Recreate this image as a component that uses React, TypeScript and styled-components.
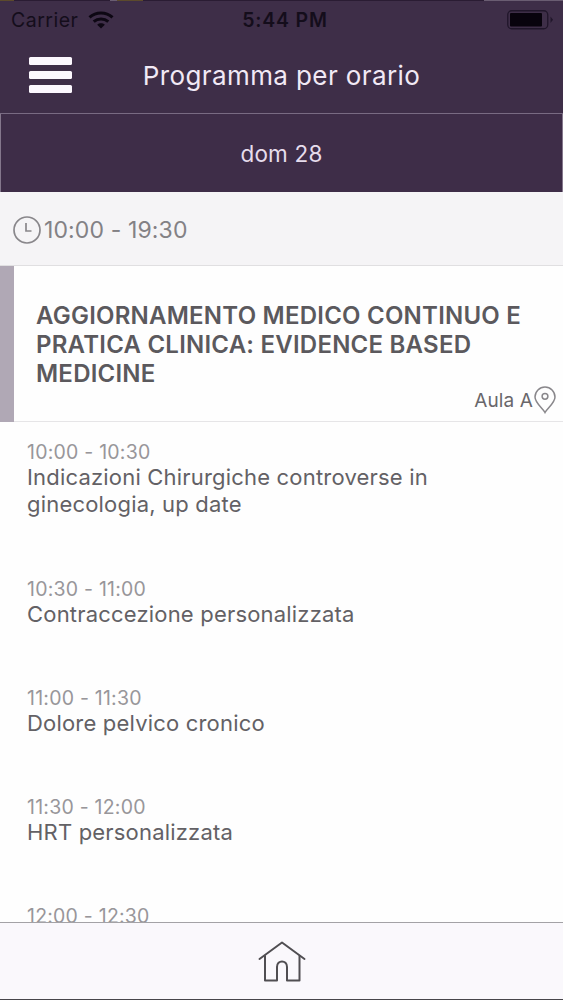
import React from "react";
import styled, { createGlobalStyle } from "styled-components";

const GlobalStyle = createGlobalStyle`
  * { box-sizing: border-box; }
  body { margin: 0; background: #fefefe; font-family: Inter, "Liberation Sans", sans-serif; }
`;

const Screen = styled.div`
  display: flex;
  flex-direction: column;
  width: 563px;
  height: 1000px;
  overflow: hidden;
  background: #fefefe;
  border-bottom: 1px solid #47454a;
`;

const Header = styled.header`
  flex: none;
  height: 114px;
  padding-top: 1px;
  background:
    linear-gradient(90deg, #5c4a2c 0 14px, #2a1c33 14px 110px, #6a5d72 110px 117px, #5c4a2c 117px 143px, #2a1c33 143px 484px, #6a5d72 484px) top / 100% 1px no-repeat,
    #3e2e48;
  border-bottom: 1px solid #796b83;
`;

const StatusBar = styled.div`
  display: grid;
  grid-template-columns: 1fr auto 1fr;
  align-items: center;
  height: 37px;
  padding: 0 10px 0 11px;
  color: #140d1b;
`;

const Carrier = styled.div`
  display: flex;
  align-items: center;
  gap: 10px;
  font-size: 19.5px;
  letter-spacing: 0.5px;
`;

const Clock = styled.div`
  padding-left: 6px;
  font-size: 19.5px;
  font-weight: 600;
  letter-spacing: 0.8px;
`;

const Battery = styled.svg`
  justify-self: end;
`;

const TitleBar = styled.div`
  display: grid;
  grid-template-columns: 1fr auto 1fr;
  align-items: center;
  height: 75px;
  padding: 0 29px;
`;

const MenuButton = styled.div`
  display: flex;
  flex-direction: column;
  gap: 6px;
  width: 43px;
  padding-bottom: 2px;
`;

const MenuLine = styled.span`
  height: 8px;
  border-radius: 1.5px;
  background: #fcf8fe;
`;

const PageTitle = styled.h1`
  margin: 0;
  font-size: 26px;
  line-height: 32px;
  font-weight: 400;
  letter-spacing: 0.4px;
  color: #f1e9f5;
  white-space: nowrap;
`;

const DayTab = styled.div`
  flex: none;
  display: flex;
  align-items: center;
  justify-content: center;
  height: 78px;
  background: #3e2d48;
  border: solid #84778c;
  border-width: 0 1px;
  font-size: 22.5px;
  letter-spacing: 0.2px;
  color: #e6dcec;
`;

const SlotBar = styled.div`
  flex: none;
  display: flex;
  align-items: center;
  gap: 3px;
  height: 74px;
  padding: 2px 0 0 13px;
  background: #f5f4f6;
  border-bottom: 1px solid #e0dfe1;
  font-size: 23px;
  letter-spacing: 0.12px;
  color: #838185;
`;

const Session = styled.section`
  flex: none;
  display: flex;
  flex-direction: column;
  height: 156px;
  padding: 35px 7px 10px 22px;
  border-left: 14px solid #b0a8b5;
  box-shadow: inset 0 -1px #e6e5e7;
`;

const SessionTitle = styled.h2`
  margin: 0;
  font-size: 24px;
  line-height: 29px;
  font-weight: 600;
  letter-spacing: 0.23px;
  color: #5b595d;
  white-space: nowrap;
`;

const Room = styled.div`
  display: flex;
  align-items: center;
  justify-content: flex-end;
  gap: 1px;
  height: 24px;
  font-size: 19px;
  letter-spacing: 0.1px;
  color: #69676b;
`;

const Talks = styled.main`
  flex: 1;
  min-height: 0;
  overflow: hidden;
`;

const Talk = styled.article`
  padding: 18px 27px 40px;
`;

const TalkTime = styled.div`
  font-size: 19.5px;
  line-height: 24px;
  letter-spacing: 0.22px;
  color: #98969a;
`;

const TalkTitle = styled.div`
  font-size: 22px;
  line-height: 27.3px;
  letter-spacing: 0.19px;
  color: #636165;
  white-space: nowrap;
`;

const TabBar = styled.nav`
  flex: none;
  display: flex;
  justify-content: center;
  height: 77px;
  padding-top: 18px;
  background: #faf8fc;
  border-top: 1px solid #a3a2a6;
`;

const talks: { time: string; lines: string[] }[] = [
  { time: "10:00 - 10:30", lines: ["Indicazioni Chirurgiche controverse in", "ginecologia, up date"] },
  { time: "10:30 - 11:00", lines: ["Contraccezione personalizzata"] },
  { time: "11:00 - 11:30", lines: ["Dolore pelvico cronico"] },
  { time: "11:30 - 12:00", lines: ["HRT personalizzata"] },
  { time: "12:00 - 12:30", lines: [] },
];

const Lines = ({ lines }: { lines: string[] }) => (
  <>
    {lines.map((line, i) => (
      <React.Fragment key={line}>
        {i > 0 && <br />}
        {line}
      </React.Fragment>
    ))}
  </>
);

const WifiIcon = () => (
  <svg width="26" height="18" viewBox="0 0 26 18" fill="none" stroke="#0d0713" strokeWidth="3">
    <path d="M1.5 6.4C8 .4 18 .4 24.500 6.4" />
    <path d="M5.700 10.700C9.900 7 16.100 7 20.300 10.700" />
    <path d="M13 17.500L9.200 13.700C11.300 11.900 14.700 11.900 16.800 13.700Z" fill="#0d0713" stroke="none" />
  </svg>
);

const ClockIcon = () => (
  <svg width="28" height="28" viewBox="0 0 28 28" fill="none" stroke="#89878b" strokeWidth="1.700">
    <circle cx="14" cy="14" r="13" />
    <path d="M13 7V15H18.500" />
  </svg>
);

const PinIcon = () => (
  <svg width="22" height="28" viewBox="0 0 22 28" fill="none" stroke="#89878b" strokeWidth="1.500">
    <path d="M11 26.500C9 22.500 1 17 1 11A10 10 0 0 1 21 11C21 17 13 22.500 11 26.500Z" />
    <circle cx="11" cy="10.300" r="2.900" />
  </svg>
);

const HomeIcon = () => (
  <svg width="48" height="42" viewBox="0 0 48 42" fill="none" stroke="#504e52" strokeWidth="2" strokeLinecap="round" strokeLinejoin="round">
    <path d="M1.500 18L24 1.500L46.500 18" />
    <path d="M7 15V39.500H19V26C19 18.500 29 18.500 29 26V39.500H41.500V15" />
  </svg>
);

export default function App() {
  return (
    <>
      <GlobalStyle />
      <Screen>
        <Header>
          <StatusBar>
            <Carrier>
              Carrier
              <WifiIcon />
            </Carrier>
            <Clock>5:44 PM</Clock>
            <Battery width="46" height="20" viewBox="0 0 46 20">
              <rect x="0.750" y="0.750" width="40" height="18" rx="4" fill="none" stroke="#20162a" strokeWidth="1.300" />
              <rect x="3" y="3" width="32" height="13.500" rx="1" fill="#08030d" />
              <path d="M43.500 6.500L46 9.750L43.500 13Z" fill="#20162a" />
            </Battery>
          </StatusBar>
          <TitleBar>
            <MenuButton>
              <MenuLine />
              <MenuLine />
              <MenuLine />
            </MenuButton>
            <PageTitle>Programma per orario</PageTitle>
          </TitleBar>
        </Header>
        <DayTab>dom 28</DayTab>
        <SlotBar>
          <ClockIcon />
          10:00 - 19:30
        </SlotBar>
        <Session>
          <SessionTitle>
            <Lines lines={["AGGIORNAMENTO MEDICO CONTINUO E", "PRATICA CLINICA: EVIDENCE BASED", "MEDICINE"]} />
          </SessionTitle>
          <Room>
            Aula A
            <PinIcon />
          </Room>
        </Session>
        <Talks>
          {talks.map((talk) => (
            <Talk key={talk.time}>
              <TalkTime>{talk.time}</TalkTime>
              <TalkTitle>
                <Lines lines={talk.lines} />
              </TalkTitle>
            </Talk>
          ))}
        </Talks>
        <TabBar>
          <HomeIcon />
        </TabBar>
      </Screen>
    </>
  );
}
